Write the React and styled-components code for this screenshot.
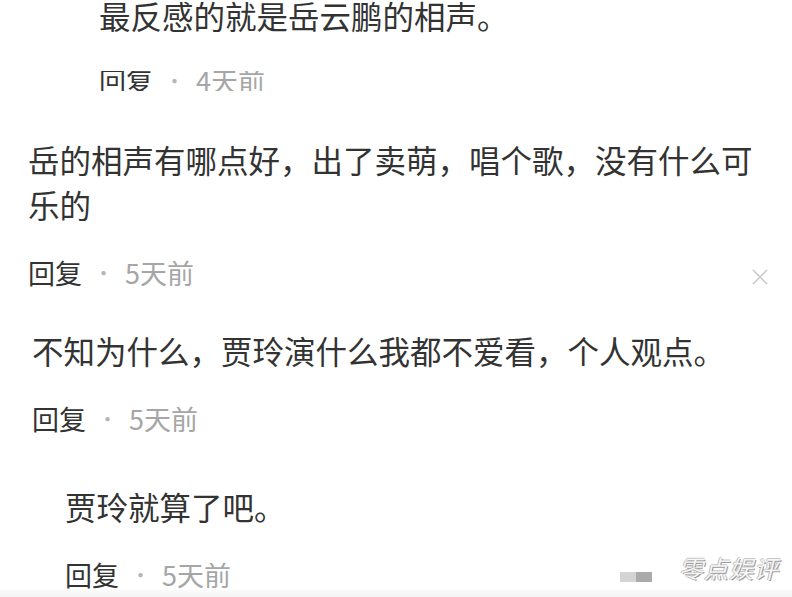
import React from "react";
import styled, { createGlobalStyle } from "styled-components";

const GlobalStyle = createGlobalStyle`
  html, body {
    margin: 0;
    padding: 0;
    background: #fff;
    overflow: hidden;
  }
  body {
    font-family: "Noto Sans CJK SC", "Noto Sans", sans-serif;
  }
`;

const Page = styled.div`
  position: relative;
  width: 792px;
  height: 597px;
  overflow: hidden;
  display: flex;
  flex-direction: column;
`;

const List = styled.div`
  display: flex;
  flex-direction: column;
`;

const Comment = styled.div`
  display: flex;
  flex-direction: column;
  padding-left: ${({ $indent }) => $indent}px;
  padding-right: 24px;
  margin-bottom: ${({ $after }) => $after || 0}px;
`;

const Body = styled.div`
  font-size: 31.5px;
  line-height: ${({ $tight }) => ($tight ? "31px" : "45px")};
  color: #333;
  max-width: 735px;
`;

const Actions = styled.div`
  display: flex;
  align-items: center;
  margin-top: ${({ $gap }) => $gap || 31}px;
  font-size: 27px;
  line-height: 30px;
  height: ${({ $clip }) => ($clip ? "20px" : "30px")};
  overflow: hidden;
`;

const Reply = styled.span`
  color: #333;
`;

const Dot = styled.span`
  display: inline-block;
  width: 43px;
  text-align: center;
  font-size: 20px;
  color: #b5b5b5;
`;

const Time = styled.span`
  color: #a6a6a6;
`;

const Close = styled.svg`
  margin-left: auto;
  margin-top: 8px;
  width: 16px;
  height: 16px;
  flex: none;
`;

const Footer = styled.div`
  flex: 1;
  background: linear-gradient(#fafafa, #f4f4f4);
`;

const Mark = styled.div`
  position: absolute;
  left: 620px;
  top: 554px;
  display: flex;
  align-items: center;
  gap: 27px;
`;

const Bars = styled.div`
  display: flex;
  margin-top: 18px;
`;

const Bar = styled.span`
  width: 16px;
  height: 10px;
  background: ${({ $c }) => $c};
`;

const MarkText = styled.span`
  font-size: 24px;
  line-height: 28px;
  font-style: italic;
  color: #f6f6f6;
  letter-spacing: 1px;
  text-shadow: 1px 1px 0 #999, -1px 0 0 #bbb, 0 -1px 0 #c8c8c8;
`;

const XIcon = () => (
  <Close viewBox="0 0 16 16">
    <path d="M1 1L15 15M15 1L1 15" stroke="#c9c9c9" strokeWidth="1.5" fill="none" />
  </Close>
);

const comments = [
  { indent: 99, text: "最反感的就是岳云鹏的相声。", time: "4天前", tight: true, gap: 40, clip: true, after: 46 },
  { indent: 28, text: "岳的相声有哪点好，出了卖萌，唱个歌，没有什么可乐的", time: "5天前", close: true, after: 40 },
  { indent: 32, text: "不知为什么，贾玲演什么我都不爱看，个人观点。", time: "5天前", after: 50 },
  { indent: 65, text: "贾玲就算了吧。", time: "5天前" },
];

const App = () => {
  return (
    <Page>
      <GlobalStyle />
      <List>
        {comments.map((c, i) => (
          <Comment key={i} $indent={c.indent} $after={c.after}>
            <Body $tight={c.tight}>{c.text}</Body>
            <Actions $clip={c.clip} $gap={c.gap}>
              <Reply>回复</Reply>
              <Dot>·</Dot>
              <Time>{c.time}</Time>
              {c.close && <XIcon />}
            </Actions>
          </Comment>
        ))}
      </List>
      <Footer />
      <Mark>
        <Bars>
          <Bar $c="#d4d4d4" />
          <Bar $c="#ababab" />
        </Bars>
        <MarkText>零点娱评</MarkText>
      </Mark>
    </Page>
  );
};

export default App;
